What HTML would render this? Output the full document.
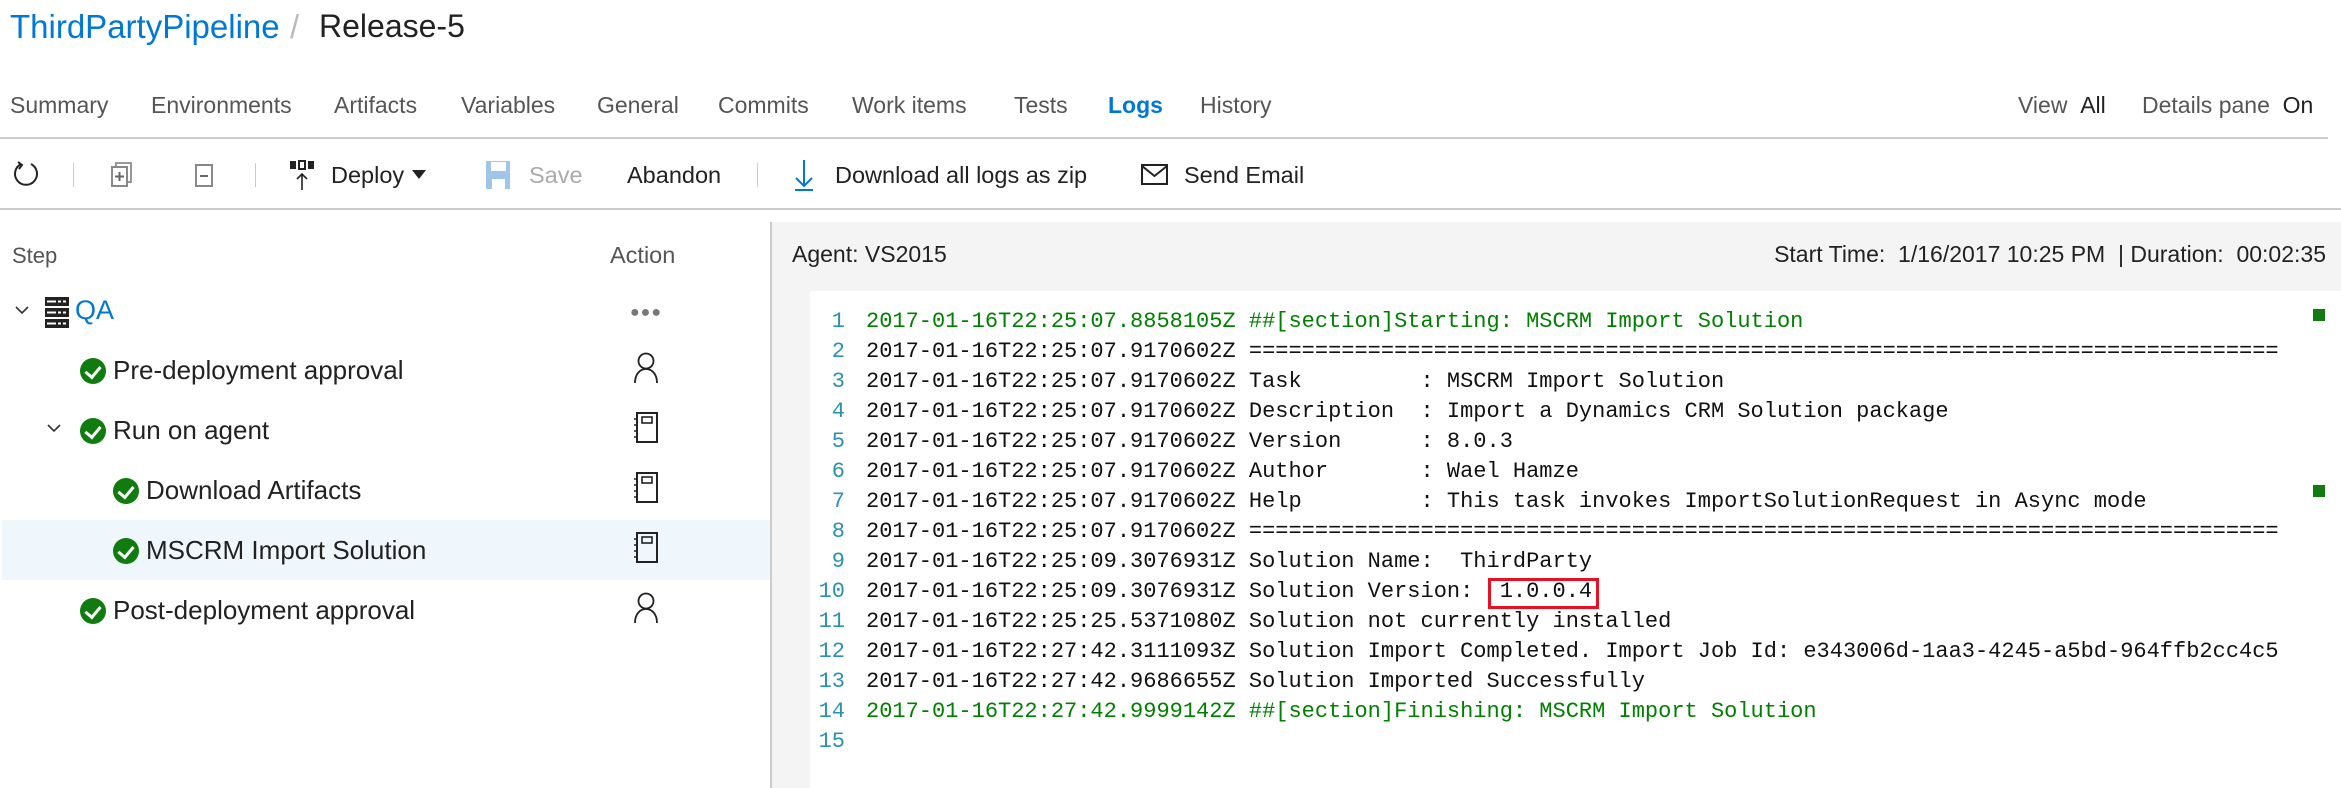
<!DOCTYPE html>
<html><head><meta charset="utf-8"><style>
*{margin:0;padding:0;box-sizing:border-box}
body{width:2341px;height:788px;overflow:hidden;background:#fff;font-family:"Liberation Sans",sans-serif;color:#222;position:relative}
.a{position:absolute;white-space:nowrap}
.tab{position:absolute;top:92px;font-size:23px;color:#555}
.tb{position:absolute;top:162px;font-size:23.5px;color:#222}
.row{position:absolute;left:0;width:770px;height:60px}
.row span{position:absolute;top:15px;font-size:26px;color:#222}
.chk{position:absolute;top:18px;width:26px;height:26px;border-radius:50%;background:#107c10}
.chk:after{content:"";position:absolute;left:8px;top:5px;width:7px;height:12px;border:solid #fff;border-width:0 3px 3px 0;transform:rotate(40deg)}
.log{position:absolute;left:810px;top:291px;right:0;bottom:0;background:#fff}
.ln{position:absolute;font-family:"Liberation Mono",monospace;font-size:22px;line-height:30px;white-space:pre}
.num{left:0;width:35px;text-align:right;color:#2b91af}
.txt{left:56px;color:#111}
.g{color:#008000}
</style></head><body>
<div class="a" style="left:10px;top:8px;font-size:33px;color:#0078d7">ThirdPartyPipeline</div>
<div class="a" style="left:290px;top:8px;font-size:33px;color:#bbb">/</div>
<div class="a" style="left:319px;top:8px;font-size:32px;color:#222">Release-5</div>

<div class="tab" style="left:10px">Summary</div>
<div class="tab" style="left:151px">Environments</div>
<div class="tab" style="left:334px">Artifacts</div>
<div class="tab" style="left:461px">Variables</div>
<div class="tab" style="left:597px">General</div>
<div class="tab" style="left:718px">Commits</div>
<div class="tab" style="left:852px">Work items</div>
<div class="tab" style="left:1014px">Tests</div>
<div class="tab" style="left:1108px;color:#0078d7;font-weight:bold">Logs</div>
<div class="tab" style="left:1200px">History</div>
<div class="tab" style="left:2018px">View <span style="color:#222">&nbsp;All</span></div>
<div class="tab" style="left:2142px">Details pane <span style="color:#222">&nbsp;On</span></div>
<div class="a" style="left:0;top:137px;width:2328px;height:2px;background:#ccc"></div>

<!-- toolbar -->
<svg class="a" style="left:12px;top:160px" width="28" height="30" viewBox="0 0 28 30"><path d="M9 4 A11 11 0 1 0 19 4" fill="none" stroke="#222" stroke-width="2"/><path d="M6 2 L10 5 L7 9" fill="none" stroke="#222" stroke-width="2"/></svg>
<div class="a" style="left:73px;top:163px;width:1px;height:24px;background:#ccc"></div>
<svg class="a" style="left:111px;top:162px" width="22" height="26"><rect x="5" y="1" width="15" height="19" fill="none" stroke="#999" stroke-width="2"/><rect x="1" y="5" width="15" height="19" fill="#fff" stroke="#888" stroke-width="2"/><path d="M8.5 10v9M4 14.5h9" stroke="#666" stroke-width="2"/></svg>
<svg class="a" style="left:195px;top:164px" width="20" height="24"><rect x="1" y="1" width="16" height="21" fill="none" stroke="#888" stroke-width="2"/><path d="M5 12h8" stroke="#666" stroke-width="2"/></svg>
<div class="a" style="left:255px;top:163px;width:1px;height:24px;background:#ccc"></div>
<svg class="a" style="left:290px;top:160px" width="30" height="32"><rect x="0" y="1" width="6" height="8" fill="#222"/><rect x="9" y="1" width="6" height="8" fill="none" stroke="#222" stroke-width="2"/><rect x="18" y="1" width="6" height="8" fill="#222"/><path d="M12 30V14M7 19l5-5 5 5" fill="none" stroke="#222" stroke-width="1.6"/></svg>
<div class="tb" style="left:331px">Deploy</div>
<div class="a" style="left:412px;top:170px;width:0;height:0;border-left:7px solid transparent;border-right:7px solid transparent;border-top:9px solid #222"></div>
<svg class="a" style="left:485px;top:160px" width="28" height="30"><path d="M1 1h24v28h-5v-10H7v10H1z" fill="#9fc6ea"/><rect x="6" y="2" width="15" height="9" fill="#fff"/></svg>
<div class="tb" style="left:529px;color:#aaa">Save</div>
<div class="tb" style="left:627px">Abandon</div>
<div class="a" style="left:757px;top:163px;width:1px;height:24px;background:#ccc"></div>
<svg class="a" style="left:792px;top:158px" width="24" height="34"><path d="M12 2v26M4 20l8 8 8-8" fill="none" stroke="#0078d7" stroke-width="2"/><path d="M3 32h18" stroke="#0078d7" stroke-width="2"/></svg>
<div class="tb" style="left:835px">Download all logs as zip</div>
<svg class="a" style="left:1141px;top:164px" width="28" height="22"><rect x="1" y="1" width="25" height="19" fill="none" stroke="#222" stroke-width="2"/><path d="M1 2l12.5 10L26 2" fill="none" stroke="#222" stroke-width="2"/></svg>
<div class="tb" style="left:1184px">Send Email</div>
<div class="a" style="left:0;top:208px;width:2341px;height:2px;background:#ccc"></div>

<!-- left panel -->
<div class="a" style="left:12px;top:243px;font-size:22px;color:#555">Step</div>
<div class="a" style="left:610px;top:242px;font-size:23.5px;color:#555">Action</div>
<div class="row" style="top:282px">
 <svg class="a" style="left:15px;top:24px" width="14" height="10"><path d="M1 1l6 6 6-6" fill="none" stroke="#333" stroke-width="1.6"/></svg>
 <svg class="a" style="left:45px;top:15px" width="24" height="31"><rect width="24" height="9" fill="#222"/><rect y="11" width="24" height="9" fill="#222"/><rect y="22" width="24" height="9" fill="#222"/><path d="M2 4.5h9M2 15.5h9M2 26.5h9M13 4.5h3M13 15.5h3M13 26.5h3M18 4.5h3M18 15.5h3M18 26.5h3" stroke="#fff" stroke-width="2"/></svg>
 <span style="left:75px;color:#0078d7;top:13px;font-size:27px">QA</span>
 <div class="a" style="left:630px;top:22px;font-size:16px;color:#777;letter-spacing:1px">●●●</div>
</div>
<div class="row" style="top:340px"><div class="chk" style="left:80px"></div><span style="left:113px">Pre-deployment approval</span>
 <svg class="a" style="left:633px;top:12px" width="26" height="32"><circle cx="13" cy="9" r="7.5" fill="none" stroke="#222" stroke-width="1.8"/><path d="M2 31c0-9 5-14 11-14s11 5 11 14" fill="none" stroke="#222" stroke-width="1.8"/></svg></div>
<div class="row" style="top:400px">
 <svg class="a" style="left:47px;top:24px" width="14" height="10"><path d="M1 1l6 6 6-6" fill="none" stroke="#333" stroke-width="1.6"/></svg>
 <div class="chk" style="left:80px"></div><span style="left:113px">Run on agent</span>
 <svg class="a" style="left:633px;top:12px" width="26" height="32"><rect x="4" y="1" width="20" height="29" fill="none" stroke="#222" stroke-width="2"/><rect x="9" y="5" width="10" height="6" fill="none" stroke="#222" stroke-width="1.6"/><path d="M1 7h4M1 13h4M1 19h4M1 25h4" stroke="#222" stroke-width="1.6"/></svg></div>
<div class="row" style="top:460px"><div class="chk" style="left:113px"></div><span style="left:146px">Download Artifacts</span>
 <svg class="a" style="left:633px;top:12px" width="26" height="32"><rect x="4" y="1" width="20" height="29" fill="none" stroke="#222" stroke-width="2"/><rect x="9" y="5" width="10" height="6" fill="none" stroke="#222" stroke-width="1.6"/><path d="M1 7h4M1 13h4M1 19h4M1 25h4" stroke="#222" stroke-width="1.6"/></svg></div>
<div class="row" style="top:520px;left:2px;width:768px;background:#eff6fc"><div class="chk" style="left:111px"></div><span style="left:144px">MSCRM Import Solution</span>
 <svg class="a" style="left:631px;top:12px" width="26" height="32"><rect x="4" y="1" width="20" height="29" fill="none" stroke="#222" stroke-width="2"/><rect x="9" y="5" width="10" height="6" fill="none" stroke="#222" stroke-width="1.6"/><path d="M1 7h4M1 13h4M1 19h4M1 25h4" stroke="#222" stroke-width="1.6"/></svg></div>
<div class="row" style="top:580px"><div class="chk" style="left:80px"></div><span style="left:113px">Post-deployment approval</span>
 <svg class="a" style="left:633px;top:12px" width="26" height="32"><circle cx="13" cy="9" r="7.5" fill="none" stroke="#222" stroke-width="1.8"/><path d="M2 31c0-9 5-14 11-14s11 5 11 14" fill="none" stroke="#222" stroke-width="1.8"/></svg></div>

<!-- right panel -->
<div class="a" style="left:770px;top:222px;width:1571px;height:566px;background:#f4f4f4;border-left:2px solid #ccc"></div>
<div class="a" style="left:792px;top:241px;font-size:23px;color:#222">Agent: VS2015</div>
<div class="a" style="right:15px;top:241px;font-size:23px;color:#222">Start Time: &nbsp;1/16/2017 10:25 PM &nbsp;| Duration: &nbsp;00:02:35</div>
<div class="log">
<div class="ln num" style="top:16px">1
2
3
4
5
6
7
8
9
10
11
12
13
14
15</div>
<div class="ln txt" style="top:16px"><span class="g">2017-01-16T22:25:07.8858105Z ##[section]Starting: MSCRM Import Solution</span>
2017-01-16T22:25:07.9170602Z ==============================================================================
2017-01-16T22:25:07.9170602Z Task         : MSCRM Import Solution
2017-01-16T22:25:07.9170602Z Description  : Import a Dynamics CRM Solution package
2017-01-16T22:25:07.9170602Z Version      : 8.0.3
2017-01-16T22:25:07.9170602Z Author       : Wael Hamze
2017-01-16T22:25:07.9170602Z Help         : This task invokes ImportSolutionRequest in Async mode
2017-01-16T22:25:07.9170602Z ==============================================================================
2017-01-16T22:25:09.3076931Z Solution Name:  ThirdParty
2017-01-16T22:25:09.3076931Z Solution Version:  1.0.0.4
2017-01-16T22:25:25.5371080Z Solution not currently installed
2017-01-16T22:27:42.3111093Z Solution Import Completed. Import Job Id: e343006d-1aa3-4245-a5bd-964ffb2cc4c5
2017-01-16T22:27:42.9686655Z Solution Imported Successfully
<span class="g">2017-01-16T22:27:42.9999142Z ##[section]Finishing: MSCRM Import Solution</span>
</div>
</div>
<div class="a" style="left:1488px;top:578px;width:111px;height:31px;border:3px solid #e81123"></div>
<div class="a" style="left:2313px;top:309px;width:12px;height:12px;background:#107c10"></div>
<div class="a" style="left:2313px;top:485px;width:12px;height:12px;background:#107c10"></div>
</body></html>
